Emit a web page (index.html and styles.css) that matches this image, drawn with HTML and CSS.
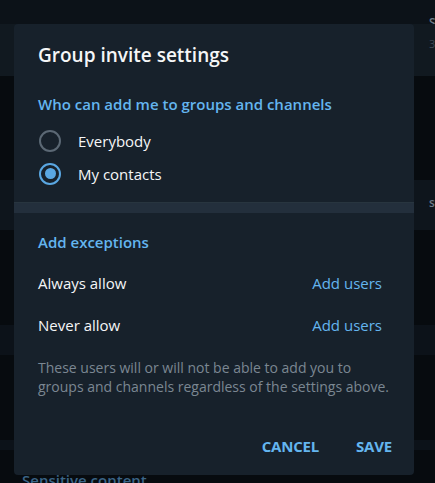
FILE: index.html
```html
<!DOCTYPE html>
<html>
<head>
<meta charset="utf-8">
<link rel="stylesheet" href="styles.css">
</head>
<body>
<div class="page">
  <div class="backdrop">
    <div class="band b1"><span class="side-s">S</span></div>
    <div class="band b2"><span class="side-n">3</span></div>
    <div class="band b3"></div>
    <div class="band b4"><span class="side-s">s</span></div>
    <div class="band b3 h95"></div>
    <div class="band b5"></div>
    <div class="band b3 h85"></div>
    <div class="band b6"></div>
    <div class="band b3 last"><span class="sensitive">Sensitive content</span></div>
  </div>

  <div class="dialog">
    <div class="title">Group invite settings</div>
    <div class="section-head">Who can add me to groups and channels</div>
    <div class="radio-row">
      <span class="radio"></span>
      <span class="radio-label">Everybody</span>
    </div>
    <div class="radio-row">
      <span class="radio checked"></span>
      <span class="radio-label">My contacts</span>
    </div>
    <div class="divider"></div>
    <div class="section-head exc">Add exceptions</div>
    <div class="exc-row">
      <span class="exc-label">Always allow</span>
      <span class="exc-link">Add users</span>
    </div>
    <div class="exc-row">
      <span class="exc-label">Never allow</span>
      <span class="exc-link">Add users</span>
    </div>
    <div class="desc">These users will or will not be able to add you to groups and channels regardless of the settings above.</div>
    <div class="buttons">
      <span class="btn">CANCEL</span>
      <span class="btn">SAVE</span>
    </div>
  </div>
</div>
</body>
</html>
```

FILE: styles.css
```css
html, body {
  margin: 0;
  padding: 0;
}
body {
  background: #070b0f;
  font-family: "Open Sans", "Noto Sans", sans-serif;
}
.page {
  position: relative;
  width: 435px;
  height: 483px;
  overflow: hidden;
}
.backdrop {
  display: flex;
  flex-direction: column;
}
.band {
  position: relative;
}
.b1 { height: 24px; background: #0c1218; }
.b2 { height: 52px; background: #111920; }
.b3 { height: 104px; background: #070b0f; }
.b3.h95 { height: 95px; }
.b3.h85 { height: 85px; }
.b3.last { height: 33px; }
.b4 { height: 50px; background: #0e151c; }
.b5 { height: 30px; background: #0c1219; }
.b6 { height: 10px; background: #0c1219; }
.side-s {
  position: absolute;
  left: 429px;
  top: 14px;
  font-size: 12px;
  font-weight: 600;
  color: #6d7a86;
}
.side-n {
  position: absolute;
  left: 429px;
  top: 12px;
  font-size: 11px;
  color: #3d4853;
}
.sensitive {
  position: absolute;
  left: 22px;
  top: 20px;
  font-size: 15px;
  font-weight: 600;
  color: #3b6588;
  line-height: 20px;
}

.dialog {
  position: absolute;
  left: 14px;
  top: 24px;
  width: 400px;
  height: 451px;
  background: #17212b;
  border-radius: 4px;
  box-sizing: border-box;
  padding-top: 20px;
}
.title {
  padding-left: 24px;
  font-size: 19px;
  font-weight: 600;
  color: #f5f6f7;
  line-height: 22px;
  height: 22px;
}
.section-head {
  margin-top: 28px;
  padding-left: 24px;
  font-size: 15px;
  font-weight: 600;
  color: #64b5ef;
  line-height: 20px;
  height: 20px;
}
.radio-row {
  display: flex;
  align-items: center;
  height: 33px;
  padding-left: 25px;
}
.section-head + .radio-row { margin-top: 10px; }
.radio {
  width: 22px;
  height: 22px;
  box-sizing: border-box;
  border: 2px solid #5b6874;
  border-radius: 50%;
  display: flex;
  align-items: center;
  justify-content: center;
}
.radio.checked {
  border-color: #5aa7e2;
}
.radio.checked::after {
  content: "";
  width: 11px;
  height: 11px;
  border-radius: 50%;
  background: #5aa7e2;
}
.radio-label {
  margin-left: 17px;
  font-size: 15px;
  color: #f5f6f7;
  line-height: 20px;
}
.divider {
  margin-top: 12px;
  height: 11px;
  background: #232f3c;
  border-top: 1px solid #28353f;
  box-sizing: border-box;
}
.section-head.exc {
  margin-top: 19px;
}
.exc-row {
  display: flex;
  justify-content: space-between;
  align-items: center;
  height: 42px;
  padding: 0 32px 0 24px;
}
.section-head.exc + .exc-row { margin-top: 10px; }
.exc-label {
  font-size: 15px;
  color: #f5f6f7;
  line-height: 20px;
}
.exc-link {
  font-size: 15px;
  color: #64b5ef;
  line-height: 20px;
}
.desc {
  margin-top: 12px;
  padding: 0 24px;
  font-size: 14px;
  line-height: 19px;
  color: #7b8792;
}
.buttons {
  margin-top: 40px;
  display: flex;
  justify-content: flex-end;
  gap: 37px;
  padding-right: 22px;
}
.btn {
  font-size: 15px;
  font-weight: 700;
  color: #64b5ef;
  line-height: 20px;
  letter-spacing: -0.2px;
}
```
